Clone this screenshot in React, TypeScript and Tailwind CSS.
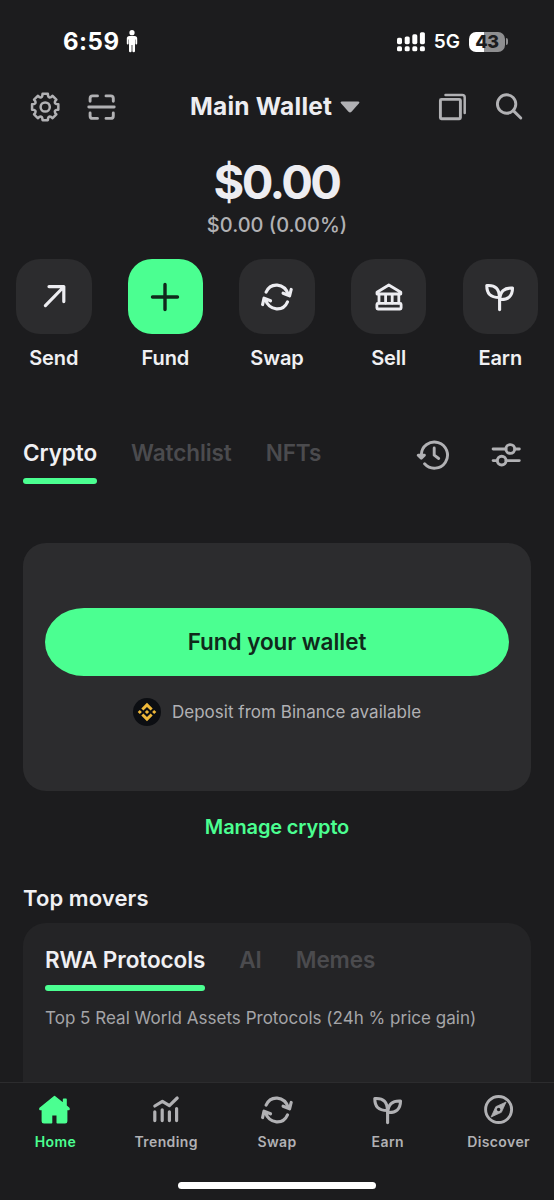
import type { ReactNode } from "react";

function polar(angle: number, r: number) {
    return `${(15.2 + r * Math.sin(angle)).toFixed(2)} ${(15 - r * Math.cos(angle)).toFixed(2)}`;
}

function SettingsIcon() {
    // eight teeth joined by rounded valleys
    let d = "";
    for (let i = 0; i < 8; i++) {
        const a = (i * Math.PI) / 4;
        d += `${i === 0 ? "M" : "L"}${polar(a - 0.25, 11.6)}L${polar(a - 0.2, 13.4)}L${polar(a + 0.2, 13.4)}L${polar(a + 0.25, 11.6)}`;
        d += `Q${polar(a + Math.PI / 8, 9.6)} ${polar(a + Math.PI / 4 - 0.25, 11.6)}`;
    }
    return (
        <svg className="size-[30px]" viewBox="0 0 30 30" fill="none" stroke="currentColor" strokeWidth="2.5" strokeLinejoin="round">
            <path d={`${d}Z`} />
            <circle cx="15.2" cy="15" r="4.6" />
        </svg>
    );
}

function ScanIcon() {
    return (
        <svg className="size-[30px]" viewBox="0 0 30 30" fill="none" stroke="currentColor" strokeWidth="2.9" strokeLinecap="round">
            <path d="M3.1 9.3V6.4Q3.1 3.9 5.6 3.9H10.5M19 3.9H23.8Q26.3 3.9 26.3 6.4V9.3M26.3 21V23.9Q26.3 26.4 23.8 26.4H19M10.5 26.4H5.6Q3.1 26.4 3.1 23.9V21" />
            <path d="M1.8 15H27.2" />
        </svg>
    );
}

function CopyIcon() {
    return (
        <svg className="size-[30px]" viewBox="0 0 30 30" fill="none" stroke="currentColor" strokeWidth="2.9" strokeLinejoin="round" strokeLinecap="round">
            <rect x="3.4" y="7.4" width="20" height="19.4" rx="1" />
            <path d="M8.5 2.9H25.2Q27.7 2.9 27.7 5.4V21" strokeWidth="2.5" />
        </svg>
    );
}

function SearchIcon() {
    return (
        <svg className="size-[30px]" viewBox="0 0 30 30" fill="none" stroke="currentColor" strokeWidth="2.9" strokeLinecap="round">
            <circle cx="12.6" cy="12" r="9.2" />
            <path d="M19.3 18.6L26.8 26" />
        </svg>
    );
}

function SendIcon() {
    return (
        <svg className="size-8" viewBox="0 0 32 32" fill="none" stroke="currentColor" strokeWidth="3.2" strokeLinecap="round" strokeLinejoin="round">
            <path d="M7.4 24.6L25.6 6M11 5.6H25.8V20.6" />
        </svg>
    );
}

function PlusIcon() {
    return (
        <svg className="size-8" viewBox="0 0 32 32" fill="none" stroke="currentColor" strokeWidth="3.4" strokeLinecap="round">
            <path d="M16 3.5V28.5M3.5 16H28.5" />
        </svg>
    );
}

function SwapIcon() {
    return (
        <svg className="size-8" viewBox="0 0 32 32" fill="none" stroke="currentColor" strokeWidth="3.1" strokeLinecap="round" strokeLinejoin="round">
            <path d="M5.1 11.2C9.3 1.4 23.2 1.2 27.7 14.2M22.1 12.2L28.6 14.9L30.2 8.4" />
            <path d="M26.5 20.8C22.3 30.6 8.6 30.8 3.9 17.8M9.5 19.8L3 17.1L1.6 23.6" />
        </svg>
    );
}

function BankIcon() {
    return (
        <svg className="size-8" viewBox="0 0 32 32" fill="none" stroke="currentColor" strokeWidth="2.8" strokeLinecap="round" strokeLinejoin="round">
            <path d="M4 11.2L15.8 4L27.8 11.2V13H4Z" />
            <path d="M6 13.5V22M12.6 13.5V22M19.2 13.5V22M25.8 13.5V22" />
            <rect x="3.9" y="22.4" width="24.2" height="5.6" rx="1" />
        </svg>
    );
}

function SproutIcon() {
    return (
        <svg className="size-8" viewBox="0 0 32 32" fill="none" stroke="currentColor" strokeWidth="3.1" strokeLinecap="round" strokeLinejoin="round">
            <path d="M15.6 28.6V17" />
            <path d="M15.4 16.5C6.1 16.5 2.8 12.5 2.8 4.5C11.6 3.8 15.4 8 15.4 16.5Z" />
            <path d="M15.8 18.5C16 10.5 20.1 6.6 28.5 7.1C28.5 15.3 23.9 19 15.8 18.5Z" />
        </svg>
    );
}

function HistoryIcon() {
    return (
        <svg className="size-9" viewBox="0 0 36 36" fill="none" stroke="currentColor" strokeWidth="2.9" strokeLinecap="round" strokeLinejoin="round">
            <path d="M7.3 17.9A13.1 13.1 0 1 1 10.6 26.8" />
            <path d="M20.2 11V18.2L24.7 21.5" />
            <path d="M4.2 18.2H10.4L7.3 21.2Z" fill="currentColor" />
        </svg>
    );
}

function SlidersIcon() {
    return (
        <svg className="size-8" viewBox="0 0 32 32" fill="none" stroke="currentColor" strokeWidth="2.9" strokeLinecap="round">
            <path d="M3.1 10H16M25 10H29.3M3.1 21.6H7M16 21.6H29.3" />
            <circle cx="20.3" cy="10" r="4.4" />
            <circle cx="11.7" cy="21.6" r="4.4" />
        </svg>
    );
}

function BinanceIcon() {
    return (
        <svg className="size-7" viewBox="0 0 28 28">
            <circle cx="14" cy="14" r="14" fill="#0c0e12" />
            <g transform="translate(4.7 4.7) scale(.775)" fill="#f0b93a">
                <path d="M16.624 13.9202l2.7175 2.7154-7.353 7.353-7.353-7.352 2.7175-2.7164 4.6355 4.6595 4.6356-4.6595zm4.6366-4.6366L24 12l-2.7154 2.7164L18.5682 12l2.6924-2.7164zm-9.272.001l2.7163 2.6914-2.7164 2.7174v-.001L9.2721 12l2.7164-2.7154zm-9.2722-.001L5.4088 12l-2.6914 2.6924L0 12l2.7164-2.7164zM11.9885.0115l7.353 7.329-2.7174 2.7154-4.6356-4.6356-4.6355 4.6595-2.7174-2.7154 7.353-7.353z" />
            </g>
        </svg>
    );
}

function HomeIcon() {
    return (
        <svg className="size-8" viewBox="0 0 32 32" fill="currentColor" stroke="currentColor" strokeWidth="1.6" strokeLinejoin="round">
            <path d="M15.5 2.6L24.6 9.9V5.4H27V11.8L29.9 14.3V15.4H27.6V27.3Q27.6 28.8 26.1 28.8H18.3V20.8H12.5V28.8H4.9Q3.4 28.8 3.4 27.3V15.4H1V14.3Z" />
        </svg>
    );
}

function TrendingIcon() {
    return (
        <svg className="size-8" viewBox="0 0 32 32" fill="none" stroke="currentColor" strokeWidth="3.2" strokeLinecap="round" strokeLinejoin="round">
            <path d="M4.8 12L12.4 7.3L19.4 11.6L27.2 4" />
            <path d="M4.8 17.8V26.6M12.2 15.8V26.6M19.4 17.8V26.6M26.6 14.6V26.6" />
        </svg>
    );
}

function CompassIcon() {
    return (
        <svg className="size-8" viewBox="0 0 32 32" fill="none" stroke="currentColor" strokeWidth="2.9">
            <circle cx="15.6" cy="15.5" r="13" />
            <path d="M23.1 8L18.4 18.3L8.1 23L12.8 12.7Z" fill="currentColor" stroke="currentColor" strokeWidth="0.8" strokeLinejoin="round" />
            <circle cx="15.6" cy="15.5" r="1.7" fill="#1c1c1e" stroke="none" />
        </svg>
    );
}

function PersonIcon() {
    return (
        <svg className="h-[23px] w-3" viewBox="0 0 12 23" fill="white">
            <circle cx="6" cy="2.7" r="2.6" />
            <path d="M3.5 6H8.5Q11.2 6 11.2 8.5V13.5Q11.2 14.6 10.3 14.6Q9.4 14.6 9.4 13.5V9.5H9V21.1Q9 22.3 7.7 22.3Q6.4 22.3 6.4 21.1V15H5.6V21.1Q5.6 22.3 4.3 22.3Q3 22.3 3 21.1V9.5H2.6V13.5Q2.6 14.6 1.7 14.6Q.8 14.6 .8 13.5V8.5Q.8 6 3.5 6Z" />
        </svg>
    );
}

function SignalIcon() {
    return (
        <svg className="h-5 w-7" viewBox="0 0 28 20" fill="white">
            <rect x="0" y="5.7" width="5" height="6.5" rx="1.6" />
            <rect x="7.7" y="4.5" width="5" height="7.7" rx="1.6" />
            <rect x="15.3" y="2.3" width="5" height="9.9" rx="1.6" />
            <rect x="22.9" y="0.2" width="5" height="12" rx="1.6" />
            <rect x="0" y="14.3" width="5" height="5" rx="1.6" />
            <rect x="7.7" y="14.3" width="5" height="5" rx="1.6" />
            <rect x="15.3" y="14.3" width="5" height="5" rx="1.6" />
            <rect x="22.9" y="14.3" width="5" height="5" rx="1.6" />
        </svg>
    );
}

function Action({ label, icon, primary }: { label: string; icon: ReactNode; primary?: boolean }) {
    return (
        <div className="flex w-[75.5px] flex-col items-center">
            <div
                className={
                    primary
                        ? "flex size-[75.5px] items-center justify-center rounded-[24px] bg-[#4bff91] text-[#10291b]"
                        : "flex size-[75.5px] items-center justify-center rounded-[24px] bg-[#2c2c2e] text-[#ededf1]"
                }
            >
                {icon}
            </div>
            <span className="mt-2.5 text-[20px] leading-7 font-semibold tracking-[-0.1px] text-[#f0f0f3]">{label}</span>
        </div>
    );
}

function Tab({ label, active }: { label: string; active?: boolean }) {
    return (
        <div className="flex flex-col">
            <span
                className={
                    active
                        ? "text-[22.5px] leading-7 font-semibold tracking-[-0.08px] text-[#f0f0f3]"
                        : "text-[22.5px] leading-7 font-semibold tracking-[-0.08px] text-[#4b4b4e]"
                }
            >
                {label}
            </span>
            {active && <div className="mt-[11px] h-1.5 rounded-full bg-[#4bff91]" />}
        </div>
    );
}

function NavItem({ label, icon, active }: { label: string; icon: ReactNode; active?: boolean }) {
    return (
        <div
            className={
                active
                    ? "flex flex-1 flex-col items-center text-[#4bff91]"
                    : "flex flex-1 flex-col items-center text-[#b1b1b4]"
            }
        >
            {icon}
            <span className="mt-1.5 text-[14px] leading-5 font-semibold tracking-[0.4px]">{label}</span>
        </div>
    );
}

export default function App() {
    return (
        <div className="flex h-[1200px] w-[554px] flex-col overflow-hidden bg-[#1c1c1e] font-['Inter',sans-serif]">
            {/* Status bar */}
            <div className="flex h-[83px] shrink-0 items-center pr-[46px] pl-[63px] text-white">
                <span className="pt-px text-[24px] font-bold tracking-[0.5px]">6:59</span>
                <div className="ml-1.5">
                    <PersonIcon />
                </div>
                <div className="ml-auto flex items-center">
                    <SignalIcon />
                    <span className="ml-[9px] pt-px text-[19px] font-semibold">5G</span>
                    <div className="ml-[9px] flex h-5 w-9 items-center justify-center rounded-[7px] bg-linear-to-r from-white from-43% to-[#8e8e90] to-43% text-[18px] font-extrabold tracking-[-0.3px] text-[#1c1c1e]">
                        43
                    </div>
                    <div className="ml-px h-[7px] w-0.5 rounded-r-full bg-[#8e8e90]" />
                </div>
            </div>

            {/* Header */}
            <div className="relative mt-px flex h-[45px] shrink-0 items-center justify-between pr-[30px] pl-[30px] text-[#b1b1b4]">
                <div className="flex gap-[27px]">
                    <SettingsIcon />
                    <ScanIcon />
                </div>
                <div className="absolute inset-y-0 left-[190px] flex items-center gap-2">
                    <span className="text-[24.5px] font-bold tracking-[0.22px] text-[#ededf1]">Main Wallet</span>
                    <svg className="h-3 w-5" viewBox="0 0 20 12" fill="currentColor">
                        <path d="M2 .5H18Q20.4 .5 18.8 2.6L11.5 10.7Q10 12.2 8.5 10.7L1.2 2.6Q-.4 .5 2 .5Z" />
                    </svg>
                </div>
                <div className="flex gap-[27px]">
                    <CopyIcon />
                    <SearchIcon />
                </div>
            </div>

            {/* Balance */}
            <div className="mt-[25px] flex shrink-0 flex-col items-center">
                <span className="mr-px text-[47px] leading-[56px] font-bold tracking-[-2.6px] text-[#ededf1]">$0.00</span>
                <span className="mt-px text-[20px] leading-7 font-medium text-[#b1b1b4]">$0.00 (0.00%)</span>
            </div>

            {/* Quick actions */}
            <div className="mt-5 flex h-[113px] shrink-0 justify-between px-4">
                <Action label="Send" icon={<SendIcon />} />
                <Action label="Fund" icon={<PlusIcon />} primary />
                <Action label="Swap" icon={<SwapIcon />} />
                <Action label="Sell" icon={<BankIcon />} />
                <Action label="Earn" icon={<SproutIcon />} />
            </div>

            {/* Asset tabs */}
            <div className="mt-[67px] flex h-[45px] shrink-0 pr-8 pl-[23px]">
                <div className="flex gap-[34px]">
                    <Tab label="Crypto" active />
                    <Tab label="Watchlist" />
                    <Tab label="NFTs" />
                </div>
                <div className="ml-auto flex h-8 items-center gap-10 text-[#b1b1b4]">
                    <HistoryIcon />
                    <SlidersIcon />
                </div>
            </div>

            {/* Fund card */}
            <div className="mx-[23px] mt-[59px] flex h-[248px] shrink-0 flex-col items-center rounded-[23px] bg-[#2c2c2e] px-[22px] pt-[65px]">
                <button className="h-[68px] w-full rounded-[39px/34px] bg-[#4bff91] text-[22.5px] font-semibold tracking-[-0.05px] text-[#10291b]">
                    Fund your wallet
                </button>
                <div className="mt-[22px] flex items-center gap-[11px]">
                    <BinanceIcon />
                    <span className="pt-0.5 text-[17px] font-normal tracking-[0.03px] text-[#b1b1b4]">Deposit from Binance available</span>
                </div>
            </div>
            <div className="mt-[22px] shrink-0 text-center text-[20px] leading-7 font-semibold tracking-[-0.15px] text-[#4bff91]">
                Manage crypto
            </div>

            {/* Top movers */}
            <h2 className="mt-[43px] shrink-0 px-[23px] text-[22px] leading-7 font-semibold tracking-[0.1px] text-[#f0f0f3]">Top movers</h2>
            <div className="mx-[23px] mt-[11px] h-[159px] shrink-0 rounded-t-[23px] bg-[#242426] px-[22px] pt-[22.5px]">
                <div className="flex h-[45px] gap-[34px]">
                    <Tab label="RWA Protocols" active />
                    <Tab label="AI" />
                    <Tab label="Memes" />
                </div>
                <p className="mt-[15.5px] text-[17px] leading-6 tracking-[0.02px] whitespace-nowrap text-[#a5a5a8]">
                    Top 5 Real World Assets Protocols (24h % price gain)
                </p>
            </div>

            {/* Bottom navigation */}
            <div className="flex h-[119px] shrink-0 flex-col items-center border-t border-[#2c2c2e]">
                <div className="flex w-full pt-[11px]">
                    <NavItem label="Home" icon={<HomeIcon />} active />
                    <NavItem label="Trending" icon={<TrendingIcon />} />
                    <NavItem label="Swap" icon={<SwapIcon />} />
                    <NavItem label="Earn" icon={<SproutIcon />} />
                    <NavItem label="Discover" icon={<CompassIcon />} />
                </div>
                <div className="mt-[30px] h-[7px] w-[198px] rounded-full bg-white" />
            </div>
        </div>
    );
}
